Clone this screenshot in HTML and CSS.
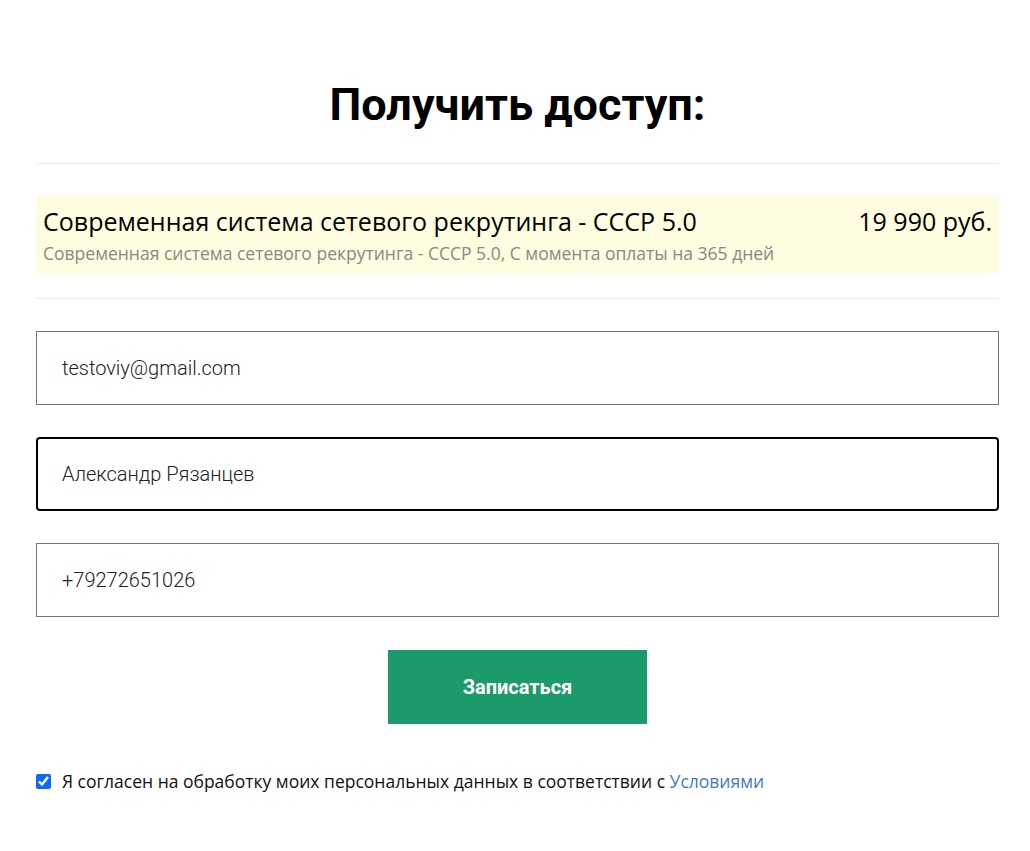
FILE: index.html
```html
<!DOCTYPE html>
<html lang="ru">
<head>
<meta charset="utf-8">
<link rel="stylesheet" href="styles.css">
</head>
<body>
<div class="wrap">
  <h1 class="title">Получить доступ:</h1>
  <hr class="sep">
  <div class="offer">
    <div class="offer-main">
      <div class="offer-name">Современная система сетевого рекрутинга - СССР 5.0</div>
      <div class="offer-desc">Современная система сетевого рекрутинга - СССР 5.0, С момента оплаты на 365 дней</div>
    </div>
    <div class="offer-price">19 990 руб.</div>
  </div>
  <hr class="sep sep2">
  <form class="form">
    <div class="field">testoviy@gmail.com</div>
    <div class="field focus">Александр Рязанцев</div>
    <div class="field">+79272651026</div>
    <div class="btn-row"><button type="button" class="btn">Записаться</button></div>
    <label class="agree"><input type="checkbox" checked> <span>Я согласен на обработку моих персональных данных в соответствии с <a href="#">Условиями</a></span></label>
  </form>
</div>
</body>
</html>
```
FILE: styles.css
```css
* { box-sizing: border-box; }
body { margin: 0; background: #fff; font-family: "Open Sans", sans-serif; color: #000; }
.wrap { width: 963px; margin: 0 0 0 36px; padding-top: 79px; }
.title { margin: 0; text-align: center; font-family: Roboto, sans-serif; font-weight: 700; font-size: 45px; line-height: 52px; color: #000; }
.sep { border: 0; border-top: 1px solid #eee; margin: 32px 0 32px; }
.sep2 { margin: 25px 0 32px; }
.offer { background: #fffddf; display: flex; justify-content: space-between; padding: 9px 7px 7px 7px; }
.offer-name { font-size: 25px; line-height: 32px; }
.offer-desc { font-size: 17.5px; line-height: 26px; color: #888; margin-top: 3px; }
.offer-price { font-size: 25px; line-height: 32px; }
.form { display: flex; flex-direction: column; }
.field { height: 74px; border: 1px solid #777; padding: 0 25px; display: flex; align-items: center; font-family: Roboto, sans-serif; font-weight: 300; font-size: 20px; color: #222; margin-bottom: 32px; }
.field.focus { border: 2px solid #000; border-radius: 4px; padding: 0 24px; }
.btn-row { display: flex; justify-content: center; margin-top: 1px; }
.btn { width: 259px; height: 74px; background: #1a9b69; border: 0; color: #fff; font-family: Roboto, sans-serif; font-weight: 700; font-size: 20px; }
.agree { display: flex; align-items: center; margin-top: 45px; font-size: 17.5px; line-height: 24px; color: #111; }
.agree input { width: 15px; height: 15px; margin: 0 11px 0 0; accent-color: #0a6cf5; }
.agree a { color: #3f7cbf; text-decoration: none; }
```
